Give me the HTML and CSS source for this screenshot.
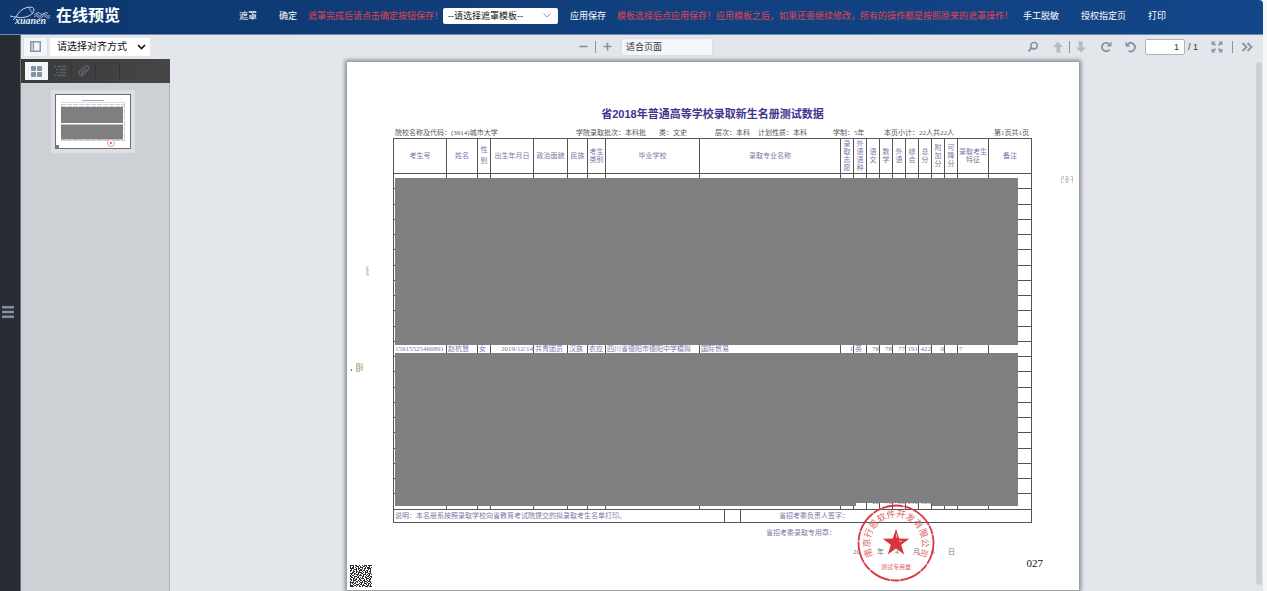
FILE: index.html
```html
<!DOCTYPE html>
<html lang="zh-CN">
<head>
<meta charset="utf-8">
<title>在线预览</title>
<link rel="stylesheet" href="styles.css">
</head>
<body>
<header class="topbar">
  <div class="brand">
    <svg class="logo" width="42" height="20" viewBox="0 0 42 20" fill="none" stroke="#c9d6e6" aria-hidden="true">
      <path d="M0 10Q4 11 6 11Q10 3 17 1.500Q24 0 24 4Q23 9 16 11Q10 12.500 6 11L3 14" stroke-width="1"/>
      <path d="M19 2L23 8" stroke-width=".8"/>
      <path d="M24 9q2-3 4 0t4 0t4 0t4 0M24 11q2-3 4 0t4 0t4 0t4 0M26 7.500q2-2 4 0t4 0t4 0" stroke-width=".8"/>
      <text class="logo-text" x="5" y="18">xuanen</text>
    </svg>
    <h1 class="brand-name">在线预览</h1>
  </div>
  <nav class="actions">
    <button class="action" type="button">遮罩</button>
    <button class="action gap-l" type="button">确定</button>
    <span class="hint">遮罩完成后请点击确定按钮保存！</span>
    <span class="template">
      <select class="template-select" aria-label="遮罩模板"><option>--请选择遮罩模板--</option></select>
      <svg class="template-arrow" width="8" height="5" viewBox="0 0 8 5" fill="none" stroke="#8d98a8" aria-hidden="true"><path d="M.5.500 4 4 7.500.500"/></svg>
    </span>
    <button class="action gap-m" type="button">应用保存</button>
    <span class="hint">模板选择后点应用保存！应用模板之后，如果还要继续修改，所有的操作都是按照原来的遮罩操作！</span>
    <button class="action gap-s" type="button">手工脱敏</button>
    <button class="action gap-l" type="button">授权指定页</button>
    <button class="action gap-l" type="button">打印</button>
  </nav>
</header>
<div class="app">
  <aside class="rail">
    <button class="rail-button" type="button" aria-label="菜单">
      <svg width="12" height="12" viewBox="0 0 12 12" fill="#87919d"><path d="M0 0h12v2.500H0zM0 4.800h12v2.500H0zM0 9.500h12V12H0z"/></svg>
    </button>
  </aside>
  <div class="work">
    <div class="toolbar">
      <div class="tools">
        <button class="toggle" type="button" aria-label="侧边栏">
          <svg width="11" height="11" viewBox="0 0 11 11" fill="none" stroke="#8796a6"><rect x=".75" y=".75" width="9.500" height="9.500" stroke-width="1.500"/><path d="M3.500 1v9" stroke-width="1.200"/><path d="M1.500 3h2M1.500 5h2M1.500 7h2" stroke-width=".6"/></svg>
        </button>
        <span class="align">
          <select class="align-select" aria-label="对齐方式"><option>请选择对齐方式</option></select>
          <svg class="align-arrow" width="9" height="6" viewBox="0 0 9 6" fill="none" stroke="#111" stroke-width="1.600" aria-hidden="true"><path d="M1 1 4.500 4.500 8 1"/></svg>
        </span>
      </div>
      <div class="tools zoomers">
        <button class="zoom" type="button" aria-label="缩小"><svg width="9" height="9" viewBox="0 0 9 9" stroke="#8392a2" stroke-width="1.600"><path d="M.5 4.500h8"/></svg></button>
        <span class="rule rule-wide"></span>
        <button class="zoom" type="button" aria-label="放大"><svg width="9" height="9" viewBox="0 0 9 9" stroke="#8392a2" stroke-width="1.600"><path d="M.5 4.500h8M4.500.500v8"/></svg></button>
        <select class="fit-select" aria-label="缩放"><option>适合页面</option></select>
      </div>
      <div class="tools tools-end">
        <button class="tool" type="button" aria-label="查找"><svg width="12" height="12" viewBox="0 0 12 12" fill="none" stroke="#8696a6"><circle cx="7" cy="4.700" r="3.200" stroke-width="1.600"/><path d="M4.500 7 1.500 10.200" stroke-width="2"/></svg></button>
        <div class="pair">
          <button class="tool" type="button" aria-label="上一页"><svg width="12" height="12" viewBox="0 0 12 12" fill="#b1bcc7"><path d="M6 .5 11 6H8v2.500l1 3H4.500V6H1z"/></svg></button>
          <span class="rule"></span>
          <button class="tool" type="button" aria-label="下一页"><svg width="12" height="12" viewBox="0 0 12 12" fill="#b1bcc7"><path d="M6 11.500 1 6.500h3V4L3 .5h4.500v6H11z"/></svg></button>
        </div>
        <button class="tool" type="button" aria-label="顺时针旋转"><svg width="12" height="12" viewBox="0 0 12 12" fill="none" stroke="#8696a6"><path d="M9.500 8.500A4.200 4.200 0 1 1 9 3" stroke-width="1.900"/><path d="M11.500.500V5.500H6.500z" fill="#8696a6" stroke="none"/></svg></button>
        <button class="tool" type="button" aria-label="逆时针旋转"><svg width="12" height="12" viewBox="0 0 12 12" fill="none" stroke="#8696a6"><path d="M3.500 9.800A4.200 4.200 0 1 0 3 3" stroke-width="1.900"/><path d="M.5.500V5.500h5z" fill="#8696a6" stroke="none"/></svg></button>
        <label class="pager"><input class="page-input" type="text" value="1" aria-label="页码"><span>/ 1</span></label>
        <div class="pair">
          <button class="tool" type="button" aria-label="全屏"><svg width="12" height="12" viewBox="0 0 12 12" fill="#8696a6"><path d="M.5.500h4L3.300 1.800 5 3.500 3.500 5 1.800 3.300.500 4.500zM11.500.500h-4l1.200 1.300L7 3.500 8.500 5l1.700-1.700 1.300 1.200zM.5 11.500h4l-1.200-1.300L5 8.500 3.500 7 1.800 8.700.500 7.500zM11.500 11.500h-4l1.200-1.300L7 8.500 8.500 7l1.700 1.700 1.300-1.200z"/></svg></button>
          <span class="rule rule-end"></span>
          <button class="tool" type="button" aria-label="更多工具"><svg width="12" height="12" viewBox="0 0 12 12" fill="none" stroke="#8696a6" stroke-width="1.900"><path d="M1.500 2 5.500 6 1.500 10M6.500 2l4 4-4 4"/></svg></button>
        </div>
      </div>
    </div>
    <div class="panes">
      <aside class="sidebar">
        <div class="tabs">
          <button class="tab tab-on" type="button" aria-label="缩略图"><svg width="11" height="11" viewBox="0 0 11 11" fill="#8393a5"><rect width="5" height="5" rx=".8"/><rect x="6" width="5" height="5" rx=".8"/><rect y="6" width="5" height="5" rx=".8"/><rect x="6" y="6" width="5" height="5" rx=".8"/></svg></button>
          <button class="tab" type="button" aria-label="大纲"><svg width="12" height="12" viewBox="0 0 12 12" stroke="#56606a" stroke-width="1.400"><path d="M0 1.500h2M3.500 1.500H12M2 4.500h2M5.500 4.500H12M2 7.500h2M5.500 7.500H12M0 10.500h2M3.500 10.500H12"/></svg></button>
          <button class="tab" type="button" aria-label="附件"><svg width="12" height="12" viewBox="0 0 12 12" fill="none" stroke="#5b646d" stroke-width="1.400"><path d="M9.500 5 5.500 9.500Q3.500 11.500 1.700 9.800T1.800 6L6.500 1.700Q8.500.200 10.200 1.500T10 5L6 8.800Q4.800 9.700 4 8.900T4.300 7L8 3.500"/></svg></button>
          <button class="tab" type="button" aria-label="图层"></button>
        </div>
        <div class="thumbs">
          <a class="thumb" href="#page1" aria-label="第1页">
            <svg class="thumb-page" viewBox="0 0 74 53" width="74" height="53">
              <rect width="74" height="53" fill="#fff"/>
              <path d="M26 5.500h22" stroke="#aaa5d0"/>
              <path d="M5 7.500h64" stroke="#ddd"/>
              <path d="M5 9.500h63M5 11.500h63M68.500 8v38M5 45.500h63" stroke="#ccc" stroke-dasharray="5 1"/>
              <rect x="5" y="12" width="62" height="16" fill="#7f7f7f"/>
              <rect x="5" y="29.500" width="62" height="15" fill="#7f7f7f"/>
              <rect x="0" y="50" width="3" height="3" fill="#777"/>
              <circle cx="55" cy="48" r="3.500" fill="#fff" stroke="#e59a9d"/><circle cx="55" cy="48" r="1.200" fill="#dd777b"/>
            </svg>
          </a>
        </div>
      </aside>
      <main class="viewer">
        <article class="paper" id="page1">
          <div class="roster">
            <h2 class="roster-title">省2018年普通高等学校录取新生名册测试数据</h2>
            <div class="facts">
              <span>院校名称及代码：(3914)城市大学</span><span>学院录取批次：本科批</span><span>类：文史</span><span>层次：本科</span><span>计划性质：本科</span><span>学制：5年</span><span>本页小计：22人共22人</span><span>第1页共1页</span>
            </div>
            <div class="sheet">
              <table class="grid">
                <colgroup><col class="c-no"><col class="c-name"><col class="c-slim"><col class="c-birth"><col class="c-party"><col class="c-nation"><col class="c-kind"><col class="c-school"><col class="c-major"><col class="c-slim" span="9"><col class="c-trait"><col class="c-note"></colgroup>
                <thead>
                  <tr><th>考生号</th><th>姓名</th><th class="loose">性别</th><th>出生年月日</th><th>政治面貌</th><th>民族</th><th>考生类别</th><th>毕业学校</th><th>录取专业名称</th><th>录取志愿</th><th>外语语种</th><th>语文</th><th>数学</th><th>外语</th><th>综合</th><th>总分</th><th>附加分</th><th>可降分</th><th>录取考生特征</th><th>备注</th></tr>
                </thead>
                <tbody>
                  <tr><td></td><td></td><td></td><td></td><td></td><td></td><td></td><td></td><td></td><td></td><td></td><td></td><td></td><td></td><td></td><td></td><td></td><td></td><td></td><td></td></tr>
                  <tr><td colspan="19"></td><td></td></tr>
                  <tr><td colspan="19"></td><td></td></tr>
                  <tr><td colspan="19"></td><td></td></tr>
                  <tr><td colspan="19"></td><td></td></tr>
                  <tr><td colspan="19"></td><td></td></tr>
                  <tr><td colspan="19"></td><td></td></tr>
                  <tr><td colspan="19"></td><td></td></tr>
                  <tr><td colspan="19"></td><td></td></tr>
                  <tr><td colspan="19"></td><td></td></tr>
                  <tr><td colspan="19"></td><td></td></tr>
                  <tr><td>15915525466891</td><td>赵杭慧</td><td>女</td><td class="num">2019/12/14</td><td>共青团员</td><td>汉族</td><td>农应</td><td>四川省德阳市德阳中学模拟</td><td>国际贸易</td><td class="num">1</td><td>英</td><td class="num">76</td><td class="num">78</td><td class="num">77</td><td class="num">191</td><td class="num">422</td><td class="num">0</td><td></td><td>7</td><td></td></tr>
                  <tr><td colspan="19"></td><td></td></tr>
                  <tr><td colspan="19"></td><td></td></tr>
                  <tr><td colspan="19"></td><td></td></tr>
                  <tr><td colspan="19"></td><td></td></tr>
                  <tr><td colspan="19"></td><td></td></tr>
                  <tr><td colspan="19"></td><td></td></tr>
                  <tr><td colspan="19"></td><td></td></tr>
                  <tr><td colspan="19"></td><td></td></tr>
                  <tr><td colspan="19"></td><td></td></tr>
                  <tr><td></td><td></td><td></td><td></td><td></td><td></td><td></td><td></td><td></td><td></td><td></td><td class="num">60</td><td class="num">78</td><td class="num">80</td><td class="num">190</td><td class="num">501</td><td></td><td></td><td></td><td></td></tr>
                </tbody>
              </table>
              <div class="mask mask-upper"></div>
              <div class="mask mask-lower"></div>
            </div>
            <div class="remarks">
              <p class="remark remark-note">说明：本名册系按照录取学校向省教育考试院提交的拟录取考生名单打印。</p>
              <p class="remark remark-blank"></p>
              <p class="remark remark-sign">省招考委负责人签字：</p>
            </div>
            <p class="seal-line">省招考委录取专用章：</p>
            <p class="date-line"><span>20</span><span>年</span><span>4</span><span>月</span><span>6</span><span>日</span></p>
            <svg class="stamp" width="80" height="80" viewBox="0 0 80 80" aria-label="印章">
              <circle cx="40" cy="40" r="37.500" fill="none" stroke="#d8383f" stroke-width="1.800" stroke-dasharray="22 .8 9 .6"/>
              <path id="arc" d="M17.200 52.600A26 26 0 1 1 62.800 52.600" fill="none"/>
              <text class="stamp-arc"><textPath href="#arc" startOffset="50%">南京行恩软件开发有限公司</textPath></text>
              <path d="M40 26l3.200 9.600 10.100.1-8.100 6 3 9.700-8.200-5.800-8.200 5.800 3-9.700-8.100-6 10.100-.1z" fill="#d8343c"/>
              <path d="M40.500 31l.5 4M43 38l3 .5" stroke="#fff" stroke-width=".7"/>
              <text class="stamp-name" x="40" y="66">测试专用章</text>
            </svg>
          </div>
          <svg class="speck speck-right" width="12" height="7" viewBox="0 0 12 7" fill="none" stroke="#c4c2b4"><path d="M.5.500h2v2h-2v4h2M5 .5h2v6H5zM5 3.500h2M9.500.500h2v6M9.500 3.500h2"/></svg>
          <svg class="speck speck-left" width="3" height="10" viewBox="0 0 3 10" fill="none" stroke="#b6b6bb"><path d="M1 0v9"/><path d="M2 .5v1M2 3v2M2 7v3"/></svg>
          <svg class="speck speck-low" width="16" height="10" viewBox="0 0 16 10" fill="none" stroke="#c4bfa8"><rect x="5" y="0" width="7" height="8" fill="#e6e3d8" stroke="none"/><path d="M5.500.500h3v8h-3zM5 3h4M5 5.500h4M11 1.500v6M10 4.500h2"/><path d="M.5 6v2" stroke="#777"/></svg>
          <footer class="paper-foot">
            <svg class="code" width="22" height="22" viewBox="0 0 22 22" stroke="#2c2c2c" stroke-width="1" shape-rendering="crispEdges" aria-label="二维码">
              <path d="M0 .5h4m1 0h2m2 0h1m2 0h1m1 0h3m1 0h4M0 1.500h1m2 0h1m2 0h3m1 0h1m2 0h2m1 0h1m2 0h1M0 2.500h1m1 0h2m1 0h1m2 0h1m1 0h3m2 0h1m1 0h3m1 0h1M0 3.500h4m2 0h1m1 0h2m2 0h1m1 0h2m1 0h4"/>
              <path d="M1 4.500h1m2 0h3m1 0h1m1 0h2m2 0h1m3 0h1m1 0h1M0 5.500h2m1 0h1m2 0h1m2 0h3m1 0h2m1 0h2m2 0h1M0 6.500h1m2 0h2m1 0h2m1 0h1m2 0h1m2 0h1m1 0h1m1 0h2M2 7.500h2m2 0h1m1 0h4m1 0h1m1 0h3m2 0h1"/>
              <path d="M0 8.500h3m1 0h2m2 0h1m2 0h2m2 0h1m2 0h3M1 9.500h1m2 0h1m1 0h3m1 0h1m2 0h3m1 0h1m1 0h1m1 0h1M0 10.500h1m1 0h2m3 0h1m1 0h3m1 0h1m2 0h1m1 0h2M0 11.500h2m2 0h3m1 0h1m3 0h2m1 0h1m1 0h2m1 0h2"/>
              <path d="M1 12.500h2m1 0h1m2 0h2m1 0h1m1 0h1m2 0h2m2 0h1m1 0h1M0 13.500h1m2 0h2m1 0h1m2 0h1m1 0h3m2 0h3m1 0h1M0 14.500h2m1 0h1m1 0h2m2 0h2m3 0h1m1 0h1m2 0h2M1 15.500h1m1 0h3m2 0h1m1 0h2m1 0h2m2 0h1m1 0h1"/>
              <path d="M0 16.500h1m2 0h1m2 0h2m1 0h1m2 0h1m1 0h3m1 0h3M0 17.500h4m1 0h1m1 0h1m2 0h3m1 0h1m2 0h1m2 0h1M0 18.500h1m1 0h1m1 0h2m3 0h1m1 0h1m2 0h3m1 0h2m1 0h1M0 19.500h1m2 0h1m2 0h3m1 0h2m1 0h1m2 0h1m1 0h1m1 0h1"/>
              <path d="M0 20.500h3m1 0h2m1 0h1m1 0h1m2 0h3m2 0h2m1 0h1M0 21.500h4m2 0h1m2 0h2m1 0h1m2 0h3m1 0h3"/>
            </svg>
            <span class="serial">027</span>
          </footer>
        </article>
        <div class="scrollbar"></div>
      </main>
    </div>
  </div>
</div>
</body>
</html>
```
FILE: styles.css
```css
* { box-sizing: border-box; }

body {
  margin: 0;
  height: 100vh;
  padding-right: 4px;
  display: flex;
  flex-direction: column;
  overflow: hidden;
  background: #f5f6f8;
  font-family: "Liberation Sans", "Noto Sans CJK SC", sans-serif;
  font-size: 9px;
}

h1, h2, p { margin: 0; }
button, select, input { font: inherit; margin: 0; padding: 0; border: 0; color: inherit; background: none; }
button { display: flex; align-items: center; justify-content: center; }
select { appearance: none; }
svg { display: block; flex: none; }

/* top bar */
.topbar {
  display: flex;
  align-items: center;
  height: 35px;
  flex: none;
  padding: 0 10px 3px;
  background: linear-gradient(90deg, #0e376d, #10407e 50%, #124688);
  border-bottom: 1px solid #6d8bb5;
  border-top-right-radius: 4px;
  color: #fff;
  white-space: nowrap;
}
.brand { display: flex; align-items: center; gap: 4px; width: 229px; flex: none; }
.logo-text { font: italic bold 10px "Liberation Serif", serif; fill: #e2e9f2; stroke: none; }
.brand-name { font-size: 16px; line-height: 20px; font-weight: 700; }
.actions { display: flex; align-items: center; }
.gap-l { margin-left: 22px; }
.gap-m { margin-left: 12px; }
.gap-s { margin-left: 10px; }
.hint { margin-left: 11px; color: #e0424f; }
.template { display: flex; align-items: center; position: relative; }
.template-select { width: 115px; height: 16px; padding-left: 5px; background: #fff; border-radius: 2px; color: #111; }
.template-arrow { position: absolute; right: 7px; }

/* frame */
.app { display: flex; flex: 1; min-height: 0; }
.rail { width: 21px; flex: none; display: flex; align-items: center; padding: 0 0 2px 2px; background: #282c34; border-right: 1px solid #6b7078; }
.work { flex: 1; display: flex; flex-direction: column; min-width: 0; background: #e3e7ec; }
.panes { display: flex; flex: 1; min-height: 0; }

/* toolbar */
.toolbar {
  display: grid;
  grid-template-columns: 1fr auto 1fr;
  align-items: center;
  height: 24px;
  padding: 0 5px 1px 3px;
}
.tools { display: flex; align-items: center; }
.toggle { width: 23px; height: 18px; margin-right: 3px; background: #f4f6fa; border-radius: 1px; box-shadow: 0 0 2px #cbd2dc; }
.align { display: flex; align-items: center; position: relative; }
.align-select { width: 100px; height: 18px; padding-left: 7px; background: #fff; font-size: 10px; color: #111; }
.align-arrow { position: absolute; right: 4px; }
.zoomers { padding-left: 9px; }
.zoom { width: 9px; height: 18px; }
.rule { width: 1px; height: 12px; background: #8e959d; }
.rule-wide { margin: 0 7px; }
.rule-end { margin: 0 3px 0 4px; }
.fit-select { width: 90px; height: 16px; margin-left: 10px; padding-left: 4px; background: #f4f6fa; box-shadow: 0 0 3px #cdd4dd; color: #333; }
.tools-end { justify-content: flex-end; gap: 3px; }
.pair { display: flex; align-items: center; }
.tool { width: 22px; height: 18px; }
.pager { display: flex; align-items: center; gap: 3px; margin-right: 5px; color: #333; }
.page-input { width: 40px; height: 16px; padding-right: 5px; border: 1px solid #aeb4bb; border-radius: 2px; background: #fff; text-align: right; }

/* sidebar */
.sidebar { width: 149px; flex: none; display: flex; flex-direction: column; background: #cdd1d6; border-right: 1px solid #aeb2b7; }
.tabs { display: flex; gap: 1px; width: 149px; padding: 3px 4px; background: linear-gradient(100deg, #3a3a3a, #464646); }
.tab { width: 23px; height: 18px; border-right: 1px solid #343434; }
.tab-on { background: #f4f6fa; border: 0; }
.thumbs { padding: 7px 4px 7px 0; display: flex; justify-content: center; }
.thumb { padding: 4px; background: #dde0e3; border-radius: 2px; }
.thumb-page { box-sizing: content-box; border: 1px solid #6b6e72; }

/* viewer */
.viewer { flex: 1; position: relative; display: flex; justify-content: center; padding: 3px 7px 1px 0; }
.scrollbar { position: absolute; top: 3px; bottom: 6px; right: 1px; width: 6px; background: #cfd0d2; border-radius: 3px; }
.paper {
  position: relative;
  width: 732px;
  display: flex;
  flex-direction: column;
  padding: 44px 3px 5px;
  background: #fff;
  box-shadow: 0 0 4px 2px #84888f;
}
.roster { position: relative; margin: 0 44px 0 43px; font-family: "Liberation Serif", "Noto Sans CJK SC", serif; font-size: 7px; line-height: 8px; color: #7d76a6; }
.roster-title { font: bold 11px/16px "Liberation Sans", "Noto Sans CJK SC", sans-serif; color: #40348f; text-align: center; }
.facts {
  display: grid;
  grid-template-columns: 181fr 83fr 56fr 43fr 75fr 51fr 110fr 38fr;
  padding: 7px 0 1px 2px;
  color: #555;
  white-space: nowrap;
}

.sheet { position: relative; }
.grid { width: 100%; table-layout: fixed; border-collapse: collapse; }
.grid th, .grid td { padding: 0; border: 1px solid #555; font-weight: 400; }
.grid th { height: 35px; }
.grid td { height: 15px; padding-left: 1px; line-height: 8px; text-align: left; white-space: nowrap; overflow: hidden; }
.grid tbody tr:nth-child(4n+2) td { height: 16px; }
.grid .num { padding: 0; text-align: right; }
.grid .loose { line-height: 11px; }
.c-no { width: 53px; }
.c-name, .c-trait { width: 31px; }
.c-slim { width: 13px; }
.c-birth, .c-note { width: 43px; }
.c-party { width: 34px; }
.c-nation { width: 20px; }
.c-kind { width: 18px; }
.c-school { width: 94px; }

.mask { position: absolute; left: 2px; right: 14px; background: #808080; }
.mask-upper { top: 40px; height: 167px; }
.mask-lower {
  top: 215px;
  height: 153px;
  clip-path: polygon(0 0, 100% 0, 100% 100%, 537px 100%, 537px 150px, 461px 150px, 461px 100%, 0 100%);
}

.remarks { display: grid; grid-template-columns: 331fr 16fr 292fr; border: 1px solid #555; border-top: 0; }
.remark { height: 12px; line-height: 12px; padding-left: 1px; border-left: 1px solid #555; }
.remark-note { border-left: 0; }
.remark-sign { padding-left: 38px; }
.seal-line { padding: 6px 0 0 373px; }
.date-line { display: grid; grid-template-columns: 24px 18px 18px 18px 17px 12px; padding: 11px 0 0 460px; color: #777; }
.stamp { position: absolute; left: 463px; bottom: -27px; }
.stamp-arc { font: 9px "Noto Sans CJK SC", sans-serif; fill: #dd5f64; text-anchor: middle; }
.stamp-name { font: 6px "Noto Sans CJK SC", sans-serif; fill: #dd5f64; text-anchor: middle; }

.speck { position: absolute; }
.speck-right { right: 6px; top: 114px; }
.speck-left { left: 19px; top: 204px; }
.speck-low { left: 4px; top: 301px; }

.paper-foot { display: flex; align-items: flex-end; justify-content: space-between; margin-top: auto; }
.serial { margin: 0 33px 17px 0; font: 11px/14px "Liberation Serif", serif; color: #111; }
```
